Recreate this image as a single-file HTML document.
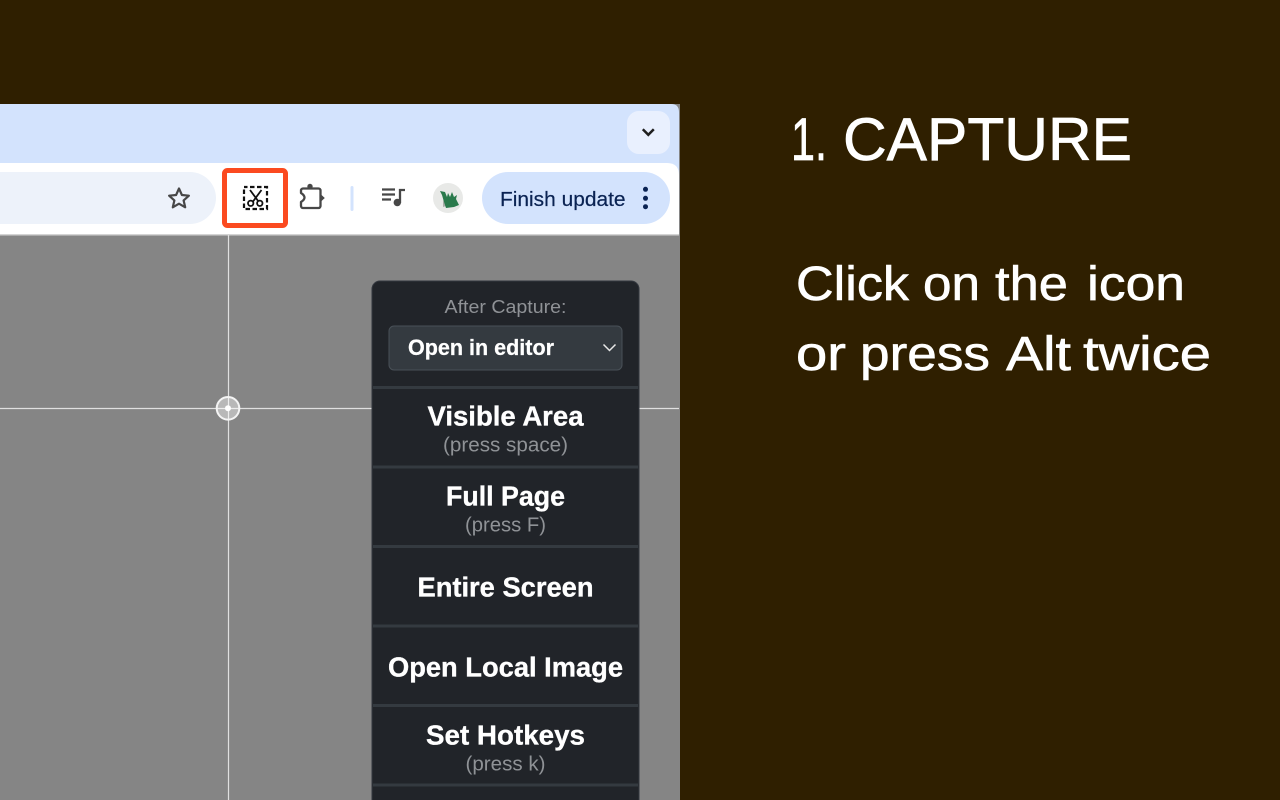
<!DOCTYPE html>
<html><head><meta charset="utf-8"><style>
html,body{margin:0;padding:0;width:1280px;height:800px;overflow:hidden;background:#2f1f00}
svg{display:block}
text{font-family:"Liberation Sans",sans-serif}
.b{font-weight:700;fill:#fff;text-anchor:middle;stroke:#fff;stroke-width:.35}
.s{fill:#8f9296;text-anchor:middle}
.h{fill:#fff;stroke:#fff;stroke-width:.7}
.m{fill:#fff;stroke:#fff;stroke-width:.6;font-size:48px}
</style></head><body>
<svg width="1280" height="800" viewBox="0 0 1280 800" xmlns="http://www.w3.org/2000/svg">
<rect width="1280" height="800" fill="#2f1f00"/>
<rect x="0" y="104" width="680" height="696" fill="#858585"/>
<path d="M0 104H671Q679 104 679 112V176H0Z" fill="#d3e3fd"/>
<rect x="627" y="111" width="43" height="43" rx="12" fill="#e9f0fe"/>
<path d="M642.800 129.300l5.500 5.500 5.500-5.500" fill="none" stroke="#1f1f1f" stroke-width="2.500"/>
<path d="M0 163H667Q679 163 679 175V234H0Z" fill="#fff"/>
<rect x="0" y="234" width="679" height="1.500" fill="#d4d4d4"/>
<path d="M0 172H190a26 26 0 0 1 0 52H0Z" fill="#edf2fa"/>
<path d="M179 188.500l2.900 6.500 7 .7-5.300 4.700 1.600 6.900-6.200-3.600-6.200 3.600 1.600-6.900-5.300-4.700 7-.7z" fill="none" stroke="#474747" stroke-width="2.200" stroke-linejoin="round"/>
<rect x="224.500" y="170.500" width="61" height="55" rx="3" fill="#fff" stroke="#fb4a20" stroke-width="5"/>
<rect x="244" y="187" width="23" height="22" fill="none" stroke="#111" stroke-width="2.200" stroke-dasharray="4.500 2.500" stroke-dashoffset="1"/>
<path d="M250 190l8.500 11.500M261.500 190l-8.500 11.500" fill="none" stroke="#111" stroke-width="1.800"/>
<circle cx="250.700" cy="203.300" r="2.700" fill="none" stroke="#111" stroke-width="1.800"/>
<circle cx="259.800" cy="203.300" r="2.700" fill="none" stroke="#111" stroke-width="1.800"/>
<path d="M303 188.500H318.500a2 2 0 0 1 2 2V206a2 2 0 0 1-2 2H303a2 2 0 0 1-2-2V202Q308 197.500 301 193V190.500a2 2 0 0 1 2-2Z" fill="none" stroke="#474747" stroke-width="2.300" stroke-linejoin="round"/>
<circle cx="310" cy="186.500" r="2.700" fill="#474747"/>
<path d="M321 194.500l3.800 3.500-3.800 3.500z" fill="#474747"/>
<rect x="350.500" y="186" width="3" height="25" rx="1.500" fill="#d3e3fd"/>
<path d="M382 189.500H395M382 194.500H395M382 199.500H391" fill="none" stroke="#474747" stroke-width="2.200"/>
<circle cx="397.300" cy="202.500" r="3.700" fill="#474747"/>
<path d="M400 203V190H405" fill="none" stroke="#474747" stroke-width="2.300"/>
<circle cx="448" cy="198" r="15" fill="#e8e9e7"/>
<path d="M443 200l3 6-3 1z" fill="#a8aca8"/>
<path d="M440 191l5 1 2 5 1-4 2 4 2-5 2 5 3-2-1 4 3 6-5 2-8 1-2-6-2-7z" fill="#2a7a4c"/>
<rect x="482" y="172" width="188" height="52" rx="26" fill="#d3e3fd"/>
<text x="500" y="206" font-size="20" fill="#0a2353" stroke="#0a2353" stroke-width=".2" textLength="125.500" lengthAdjust="spacingAndGlyphs">Finish update</text>
<circle cx="645.500" cy="189.300" r="2.500" fill="#0a2353"/><circle cx="645.500" cy="198.300" r="2.500" fill="#0a2353"/><circle cx="645.500" cy="206.700" r="2.500" fill="#0a2353"/>
<path d="M228.500 235V800M0 408.500H679" stroke="#e0e0e0" stroke-width="1.200" fill="none"/>
<circle cx="228" cy="408.300" r="11.300" fill="#fff" fill-opacity=".42" stroke="#f4f4f4" stroke-width="2"/>
<circle cx="228" cy="408.300" r="3" fill="#fff"/>
<rect x="372" y="281" width="267" height="530" rx="8" fill="#212429" stroke="#34383f" stroke-width="1"/>
<text class="s" x="505.500" y="313" font-size="18" textLength="122" lengthAdjust="spacingAndGlyphs">After Capture:</text>
<rect x="389" y="326" width="233" height="44" rx="5" fill="#343a40" stroke="#495057" stroke-width="1"/>
<text x="408" y="355" font-size="22" font-weight="700" fill="#fff" stroke="#fff" stroke-width=".25" textLength="146" lengthAdjust="spacingAndGlyphs">Open in editor</text>
<path d="M603.500 344.500l6 6 6-6" fill="none" stroke="#e8e8e8" stroke-width="1.500"/>
<g fill="#343a40">
<rect x="373" y="386" width="265" height="3"/><rect x="373" y="465.500" width="265" height="3"/><rect x="373" y="545" width="265" height="3"/><rect x="373" y="624.500" width="265" height="3"/><rect x="373" y="704" width="265" height="3"/><rect x="373" y="783.500" width="265" height="3"/>
</g>
<text class="b" x="505.500" y="425.500" font-size="28" textLength="156" lengthAdjust="spacingAndGlyphs">Visible Area</text>
<text class="s" x="505.500" y="451.500" font-size="20" textLength="125" lengthAdjust="spacingAndGlyphs">(press space)</text>
<text class="b" x="505.500" y="505.500" font-size="28" textLength="119" lengthAdjust="spacingAndGlyphs">Full Page</text>
<text class="s" x="505.500" y="531.500" font-size="20" textLength="81" lengthAdjust="spacingAndGlyphs">(press F)</text>
<text class="b" x="505.500" y="596.500" font-size="28" textLength="176" lengthAdjust="spacingAndGlyphs">Entire Screen</text>
<text class="b" x="505.500" y="676.500" font-size="28" textLength="235" lengthAdjust="spacingAndGlyphs">Open Local Image</text>
<text class="b" x="505.500" y="744.500" font-size="28" textLength="159" lengthAdjust="spacingAndGlyphs">Set Hotkeys</text>
<text class="s" x="505.500" y="770.500" font-size="20" textLength="80" lengthAdjust="spacingAndGlyphs">(press k)</text>
<text class="h" x="791" y="160" font-size="60" textLength="36" lengthAdjust="spacingAndGlyphs">1.</text>
<text class="h" x="843" y="160" font-size="60" textLength="289" lengthAdjust="spacingAndGlyphs">CAPTURE</text>
<text class="m" x="796" y="300" textLength="113" lengthAdjust="spacingAndGlyphs">Click</text>
<text class="m" x="923" y="300" textLength="57" lengthAdjust="spacingAndGlyphs">on</text>
<text class="m" x="995" y="300" textLength="73" lengthAdjust="spacingAndGlyphs">the</text>
<text class="m" x="1087" y="300" textLength="98" lengthAdjust="spacingAndGlyphs">icon</text>
<text class="m" x="796" y="370" textLength="50" lengthAdjust="spacingAndGlyphs">or</text>
<text class="m" x="860" y="370" textLength="130" lengthAdjust="spacingAndGlyphs">press</text>
<text class="m" x="1006" y="370" textLength="65" lengthAdjust="spacingAndGlyphs">Alt</text>
<text class="m" x="1083" y="370" textLength="128" lengthAdjust="spacingAndGlyphs">twice</text>
</svg>
</body></html>
